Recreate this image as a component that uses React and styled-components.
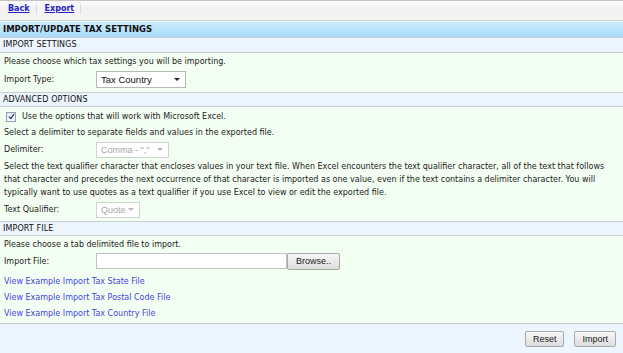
import React from "react";
import styled, { createGlobalStyle } from "styled-components";

const Global = createGlobalStyle`
  html, body { margin: 0; padding: 0; background: #edf5fe; }
  body { font-family: "DejaVu Sans", Verdana, sans-serif; font-size: 8px; color: #1a1a1a; }
`;

const Page = styled.div`
  width: 623px;
  height: 353px;
  display: flex;
  flex-direction: column;
  background: #edf5fe;
  overflow: hidden;
`;

const TopBar = styled.div`
  height: 21px;
  box-sizing: border-box;
  border-top: 1px solid #c4c4c4;
  border-bottom: 1px solid #d2d2d2;
  background: linear-gradient(#f8f8f8 0, #f8f8f8 4px, #f3f3f3 5px, #f3f3f3 100%);
  display: flex;
  align-items: flex-start;
  padding: 3px 0 0 6px;
`;

const NavLink = styled.a`
  font-weight: bold;
  color: #2323c8;
  text-decoration: underline;
  font-size: 8px;
  padding: 0 6px 0 2px;
  border-right: 1px solid #dcdcdc;
  margin-right: 6px;
  line-height: 10px;
`;

const TitleBar = styled.div`
  height: 16px;
  box-sizing: border-box;
  margin-top: 1px;
  background: linear-gradient(#cdebfd, #a9dcfb);
  border-bottom: 1px solid #c6cdd3;
  font-weight: bold;
  font-size: 8.5px;
  padding: 2px 0 0 3px;
  color: #111;
`;

const SectionHeader = styled.div`
  height: ${(p) => p.$h || 15}px;
  box-sizing: border-box;
  background: #edf5fe;
  border-top: ${(p) => (p.$top ? "1px solid #c8cdd0" : "none")};
  border-bottom: 1px solid #c8cdd0;
  padding: 2px 0 0 3px;
  font-size: 8px;
  letter-spacing: 0.1px;
  color: #111;
`;

const Content = styled.div`
  background: #f4fff3;
  display: flex;
  flex-direction: column;
  padding: ${(p) => p.$pad || "3px 0 4px 4px"};
  gap: ${(p) => p.$gap || 4}px;
`;

const Line = styled.div`
  line-height: 13px;
  height: ${(p) => p.$h || 13}px;
  display: flex;
  align-items: center;
  white-space: nowrap;
`;

const Para = styled.div`
  line-height: 13px;
  padding-right: 8px;
`;

const Row = styled.div`
  display: flex;
  align-items: center;
  height: ${(p) => p.$h || 18}px;
  margin-bottom: ${(p) => p.$mb || 0}px;
`;

const Label = styled.div`
  width: 92px;
  flex: none;
`;

const Select = styled.div`
  width: ${(p) => p.$w}px;
  height: ${(p) => p.$hgt || 16}px;
  box-sizing: border-box;
  border: 1px solid ${(p) => (p.$disabled ? "#d2d2d2" : "#b8b8b8")};
  background: #fff;
  display: flex;
  align-items: center;
  justify-content: space-between;
  padding: 0 5px 0 4px;
  font-family: "Liberation Sans", Arial, sans-serif;
  font-size: ${(p) => (p.$disabled ? 9 : 9.5)}px;
  color: ${(p) => (p.$disabled ? "#a6a6a6" : "#111")};
`;

const Arrow = styled.span`
  width: 0;
  height: 0;
  border-left: 3px solid transparent;
  border-right: 3px solid transparent;
  border-top: 3px solid ${(p) => (p.$disabled ? "#b8b8b8" : "#222")};
`;

const CheckBox = styled.span`
  width: 10px;
  height: 10px;
  box-sizing: border-box;
  border: 1px solid #8f9fb8;
  background: linear-gradient(#e4e8f0, #f7f8fa);
  margin: 0 6px 0 2px;
  display: inline-flex;
  align-items: center;
  justify-content: center;
`;

const TextInput = styled.div`
  width: 191px;
  height: 16px;
  box-sizing: border-box;
  border: 1px solid #c0c0c0;
  background: #fff;
`;

const Btn = styled.button`
  height: ${(p) => p.$h || 16}px;
  box-sizing: border-box;
  padding: 0 ${(p) => p.$px || 6}px;
  border: 1px solid #a9a9a9;
  border-radius: 2px;
  background: linear-gradient(#f7f7f7, #dcdcdc);
  font-family: "Liberation Sans", Arial, sans-serif;
  font-size: 9px;
  color: #222;
  margin-left: ${(p) => p.$ml || 0}px;
`;

const ExLink = styled.a`
  color: #4343e4;
  text-decoration: none;
  line-height: 13px;
  height: 15px;
  display: flex;
  align-items: center;
`;

const Footer = styled.div`
  flex: 1;
  border-top: 1px solid #c8cdd0;
  background: #edf5fe;
  display: flex;
  justify-content: flex-end;
  align-items: flex-start;
  padding: 7px 7px 0 0;
`;

export default function App() {
  return (
    <>
      <Global />
      <Page>
        <TopBar>
          <NavLink href="#">Back</NavLink>
          <NavLink href="#">Export</NavLink>
        </TopBar>
        <TitleBar>IMPORT/UPDATE TAX SETTINGS</TitleBar>
        <SectionHeader>IMPORT SETTINGS</SectionHeader>
        <Content $pad="2px 0 3px 4px" $gap={1}>
          <Line>Please choose which tax settings you will be importing.</Line>
          <Row $h={20}>
            <Label>Import Type:</Label>
            <Select $w={90} $hgt={17}>
              <span>Tax Country</span>
              <Arrow />
            </Select>
          </Row>
        </Content>
        <SectionHeader $top>ADVANCED OPTIONS</SectionHeader>
        <Content $pad="2px 0 3px 4px" $gap={2}>
          <Line $h={15}>
            <CheckBox>
              <svg width="7" height="7" viewBox="0 0 7 7">
                <path d="M1 3.6 L2.8 5.4 L6 1.2" fill="none" stroke="#2a3a8c" strokeWidth="1.3" />
              </svg>
            </CheckBox>
            Use the options that will work with Microsoft Excel.
          </Line>
          <Line>Select a delimiter to separate fields and values in the exported file.</Line>
          <Row $h={17}>
            <Label>Delimiter:</Label>
            <Select $w={73} $disabled>
              <span>Comma - ","</span>
              <Arrow $disabled />
            </Select>
          </Row>
          <Para>
            Select the text qualifier character that encloses values in your text file. When Excel encounters the text qualifier character, all of the text that follows that character and precedes the next occurrence of that character is imported as one value, even if the text contains a delimiter character. You will typically want to use quotes as a text qualifier if you use Excel to view or edit the exported file.
          </Para>
          <Row $h={17}>
            <Label>Text Qualifier:</Label>
            <Select $w={44} $disabled>
              <span>Quote</span>
              <Arrow $disabled />
            </Select>
          </Row>
        </Content>
        <SectionHeader $top>IMPORT FILE</SectionHeader>
        <Content $pad="2px 0 2px 4px" $gap={1}>
          <Line>Please choose a tab delimited file to import.</Line>
          <Row $h={18} $mb={3}>
            <Label>Import File:</Label>
            <TextInput />
            <Btn $h={17} $px={8}>Browse..</Btn>
          </Row>
          <ExLink href="#">View Example Import Tax State File</ExLink>
          <ExLink href="#">View Example Import Tax Postal Code File</ExLink>
          <ExLink href="#">View Example Import Tax Country File</ExLink>
        </Content>
        <Footer>
          <Btn $px={7}>Reset</Btn>
          <Btn $px={7} $ml={10}>Import</Btn>
        </Footer>
      </Page>
    </>
  );
}
